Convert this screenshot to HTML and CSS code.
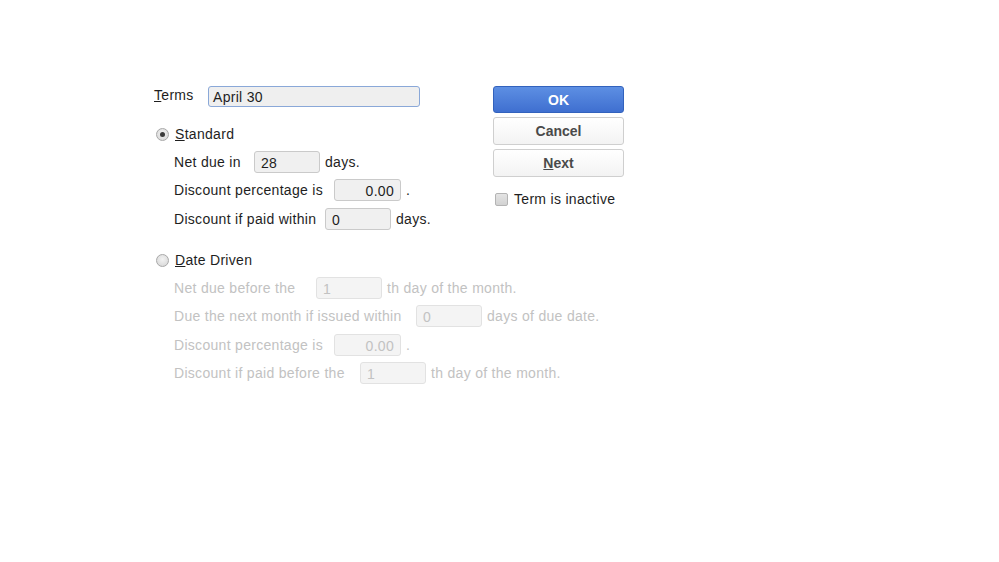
FILE: index.html
```html
<!DOCTYPE html>
<html>
<head>
<meta charset="utf-8">
<link rel="stylesheet" href="styles.css">
</head>
<body>
<div class="dialog">
  <div class="left">
    <div class="row terms-row">
      <span class="lbl w-terms"><u>T</u>erms</span>
      <div class="field terms-field">April 30</div>
    </div>

    <div class="row radio-row r-standard">
      <span class="radio checked"></span>
      <span class="radio-lbl"><u>S</u>tandard</span>
    </div>
    <div class="row sub m6">
      <span class="lbl" style="width:80px">Net due in</span>
      <div class="field">28</div>
      <span class="suffix">days.</span>
    </div>
    <div class="row sub m6">
      <span class="lbl" style="width:160px">Discount percentage is</span>
      <div class="field num">0.00</div>
      <span class="suffix">.</span>
    </div>
    <div class="row sub m7">
      <span class="lbl" style="width:151px">Discount if paid within</span>
      <div class="field">0</div>
      <span class="suffix">days.</span>
    </div>

    <div class="row radio-row r-date">
      <span class="radio"></span>
      <span class="radio-lbl"><u>D</u>ate Driven</span>
    </div>
    <div class="row sub disabled m6">
      <span class="lbl" style="width:142px">Net due before the</span>
      <div class="field">1</div>
      <span class="suffix">th day of the month.</span>
    </div>
    <div class="row sub disabled m6">
      <span class="lbl" style="width:242px">Due the next month if issued within</span>
      <div class="field">0</div>
      <span class="suffix">days of due date.</span>
    </div>
    <div class="row sub disabled m7">
      <span class="lbl" style="width:160px">Discount percentage is</span>
      <div class="field num">0.00</div>
      <span class="suffix">.</span>
    </div>
    <div class="row sub disabled m6">
      <span class="lbl" style="width:186px">Discount if paid before the</span>
      <div class="field">1</div>
      <span class="suffix">th day of the month.</span>
    </div>
  </div>

  <div class="right">
    <button class="btn primary">OK</button>
    <button class="btn">Cancel</button>
    <button class="btn"><u>N</u>ext</button>
    <div class="check-row">
      <span class="checkbox"></span>
      <span class="check-lbl">Term is inactive</span>
    </div>
  </div>
</div>
</body>
</html>
```

FILE: styles.css
```css
html, body {
  margin: 0;
  padding: 0;
  background: #ffffff;
}

body {
  font-family: "Liberation Sans", Arial, sans-serif;
  font-size: 14px;
  letter-spacing: 0.3px;
  color: #1e1e1e;
}

.dialog {
  display: flex;
  padding: 86px 0 0 154px;
}

.left {
  flex: none;
  width: 339px;
  display: flex;
  flex-direction: column;
}

.right {
  flex: none;
  width: 131px;
  display: flex;
  flex-direction: column;
  gap: 4px;
}

.row {
  display: flex;
  align-items: center;
  height: 22px;
}

.terms-row {
  height: 21px;
}

.lbl {
  flex: none;
  white-space: nowrap;
}

.w-terms {
  width: 54px;
  margin-top: -3px;
}

.field {
  flex: none;
  box-sizing: border-box;
  width: 66px;
  height: 22px;
  padding: 2px 6px 0 6px;
  line-height: 18px;
  background: #f0f0f0;
  border: 1px solid #cacaca;
  border-radius: 3px;
  color: #1e1e1e;
}

.field.num {
  text-align: right;
  width: 67px;
}

.terms-field {
  width: 212px;
  height: 21px;
  padding: 1px 4px 0 4px;
  border: 1px solid #8aa8d8;
  background: #efefef;
  border-radius: 3px;
}

.suffix {
  flex: none;
  margin-left: 5px;
  white-space: nowrap;
}

.sub {
  padding-left: 20px;
}

.m6 { margin-top: 6px; }
.m7 { margin-top: 7px; }

.radio-row {
  padding-left: 2px;
}

.r-standard { margin-top: 16px; }
.r-date { margin-top: 19px; }

.radio {
  box-sizing: border-box;
  width: 13px;
  height: 13px;
  border-radius: 50%;
  border: 1px solid #a8a8a8;
  background: radial-gradient(circle at 50% 40%, #f2f2f2 0%, #d4d4d4 100%);
  display: flex;
  align-items: center;
  justify-content: center;
  flex: none;
}

.radio.checked::after {
  content: "";
  width: 5px;
  height: 5px;
  border-radius: 50%;
  background: #3a3a3a;
}

.radio-lbl {
  margin-left: 6px;
}

.disabled {
  color: #c2c2c2;
}

.disabled .field {
  color: #c2c2c2;
  background: #f4f4f4;
  border-color: #e2e2e2;
}

.btn {
  box-sizing: border-box;
  width: 131px;
  height: 28px;
  font-family: "Liberation Sans", Arial, sans-serif;
  font-size: 14px;
  font-weight: bold;
  color: #4a4a4a;
  background: linear-gradient(#ffffff, #f3f3f3);
  border: 1px solid #cfcfcf;
  border-radius: 3px;
  padding: 0;
  margin: 0;
}

.btn.primary {
  color: #ffffff;
  background: linear-gradient(#5d8fe3, #3f6fd0);
  border: 1px solid #3262bd;
  height: 27px;
}

.check-row {
  display: flex;
  align-items: center;
  height: 20px;
  margin-top: 8px;
  padding-left: 2px;
}

.checkbox {
  box-sizing: border-box;
  width: 13px;
  height: 13px;
  border: 1px solid #b4b4b4;
  border-radius: 2px;
  background: linear-gradient(#e4e4e4, #d2d2d2);
  flex: none;
}

.check-lbl {
  margin-left: 6px;
}
```
